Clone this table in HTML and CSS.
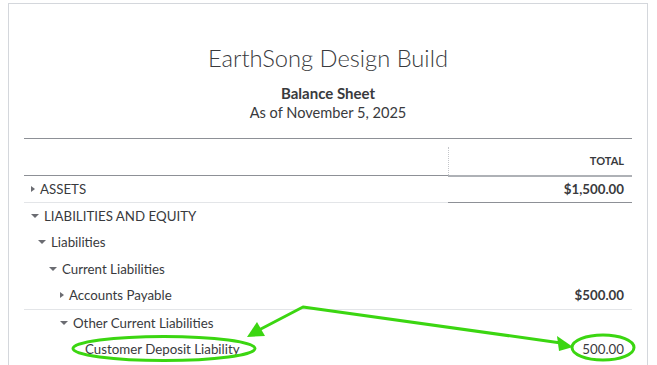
FILE: index.html
```html
<!DOCTYPE html>
<html lang="en">
<head>
    <meta charset="UTF-8">
    <meta name="viewport" content="width=device-width, initial-scale=1.0">
    <title>Balance Sheet</title>
    <link rel="stylesheet" href="styles.css">
</head>
<body>

    <div class="report">

        <!-- Report title block -->
        <div class="report-header">
            <h1 class="company">EarthSong Design Build</h1>
            <div class="report-name">Balance Sheet</div>
            <div class="report-date">As of November 5, 2025</div>
        </div>

        <!-- Column header -->
        <div class="sheet-head">
            <div class="head-label"></div>
            <div class="head-total">TOTAL</div>
        </div>

        <!-- Account rows -->
        <div class="row row-assets">
            <div class="label lvl-0"><span class="caret caret-right"></span>ASSETS</div>
            <div class="amount bold">$1,500.00</div>
        </div>
        <div class="row">
            <div class="label lvl-0"><span class="caret caret-down"></span>LIABILITIES AND EQUITY</div>
            <div class="amount"></div>
        </div>
        <div class="row">
            <div class="label lvl-1"><span class="caret caret-down"></span>Liabilities</div>
            <div class="amount"></div>
        </div>
        <div class="row">
            <div class="label lvl-2"><span class="caret caret-down"></span>Current Liabilities</div>
            <div class="amount"></div>
        </div>
        <div class="row row-split">
            <div class="label lvl-3"><span class="caret caret-right"></span>Accounts Payable</div>
            <div class="amount bold">$500.00</div>
        </div>
        <div class="row">
            <div class="label lvl-3"><span class="caret caret-down"></span>Other Current Liabilities</div>
            <div class="amount"></div>
        </div>
        <div class="row">
            <div class="label lvl-4">Customer Deposit Liability</div>
            <div class="amount">500.00</div>
        </div>

    </div>

    <!-- Green callout marks drawn over the report -->
    <svg class="callouts" width="657" height="365" viewBox="0 0 657 365">
        <g fill="none" stroke="#3bd611" stroke-width="3" stroke-linejoin="round">
            <ellipse cx="164" cy="348.5" rx="91" ry="12"/>
            <ellipse cx="603" cy="347.5" rx="31" ry="12.5"/>
            <polyline points="257,331 303,307 561,343"/>
        </g>
        <g fill="#3bd611">
            <polygon points="247,337 257,322 265,336"/>
            <polygon points="573,347 557,336 559,351"/>
        </g>
    </svg>

</body>
</html>
```

FILE: styles.css
```css
body {
    margin: 0;
    background: #fff;
    font-family: Lato, "Open Sans", sans-serif;
    color: #393a3d;
}

.report {
    margin: 3px 0 0 8px;
    width: 640px;
    height: 400px;
    box-sizing: border-box;
    border: 1px solid #d4d7dc;
    border-bottom: none;
    padding: 0 15px;
}

.report-header {
    text-align: center;
    padding-top: 40px;
    padding-bottom: 16px;
}

.company {
    margin: 0 0 12px;
    font-size: 23.7px;
    font-weight: 300;
    line-height: 28px;
}

.report-name {
    font-size: 15px;
    font-weight: 700;
    line-height: 19px;
}

.report-date {
    font-size: 14.6px;
    line-height: 19px;
}

/* column header: dark rules above and below, dotted divider before TOTAL */
.sheet-head {
    display: flex;
    height: 38px;
    box-sizing: border-box;
    border-top: 1px solid #8d9096;
    border-bottom: 1px solid #8d9096;
}

.head-label {
    flex: 1;
}

.head-total {
    width: 184px;
    box-sizing: border-box;
    margin-top: 8px;
    padding: 0 8px 2px 0;
    border-left: 1px dotted #c4c6ca;
    display: flex;
    align-items: center;
    justify-content: flex-end;
    font-size: 11px;
    font-weight: 700;
    box-shadow: 0 2px 0 #aeb1b6;
}

.row {
    display: flex;
    height: 26.5px;
    font-size: 13.3px;
}

.label {
    flex: 1;
    display: flex;
    align-items: center;
    box-sizing: border-box;
    white-space: nowrap;
}

.amount {
    width: 184px;
    box-sizing: border-box;
    padding-right: 8px;
    display: flex;
    align-items: center;
    justify-content: flex-end;
}

.bold {
    font-weight: 700;
}

.row-assets .label {
    border-bottom: 1px solid #e3e5e8;
}

.row-assets .amount {
    border-bottom: 1px solid #8d9096;
}

.row-split {
    border-bottom: 1px solid #e3e5e8;
}

.lvl-0 { padding-left: 7px; }
.lvl-1 { padding-left: 14px; }
.lvl-2 { padding-left: 25px; }
.lvl-3 { padding-left: 36px; }
.lvl-4 { padding-left: 61px; }

/* expand / collapse arrows */
.caret {
    display: inline-block;
    width: 0;
    height: 0;
    margin-right: 5px;
}

.caret-right {
    border-left: 4px solid #6b6c72;
    border-top: 3.5px solid transparent;
    border-bottom: 3.5px solid transparent;
}

.caret-down {
    border-top: 4px solid #6b6c72;
    border-left: 4px solid transparent;
    border-right: 4px solid transparent;
}

.callouts {
    position: absolute;
    left: 0;
    top: 0;
    pointer-events: none;
}
```
